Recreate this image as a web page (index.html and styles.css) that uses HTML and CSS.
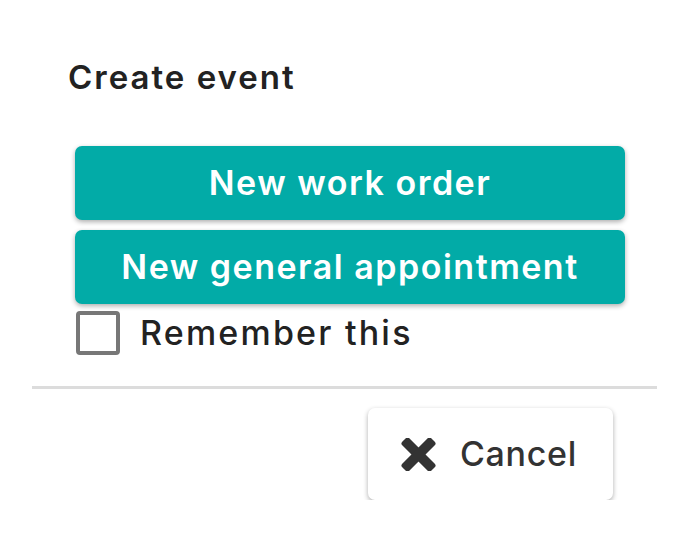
FILE: index.html
```html
<!DOCTYPE html>
<html lang="en">
<head>
<meta charset="utf-8">
<title>Create event</title>
<link rel="stylesheet" href="styles.css">
</head>
<body>
<div class="dialog">
  <h1 class="title">Create event</h1>
  <div class="actions">
    <button class="primary">New work order</button>
    <button class="primary">New general appointment</button>
    <label class="remember">
      <span class="box"></span>
      <span class="remember-text">Remember this</span>
    </label>
  </div>
  <hr class="divider">
  <div class="footer">
    <button class="cancel">
      <svg class="x-icon" viewBox="0 0 35 33" width="35" height="33" aria-hidden="true">
        <rect x="-3" y="11.5" width="41" height="10" rx="2.5" transform="rotate(45 17.5 16.5)" fill="#333"/>
        <rect x="-3" y="11.5" width="41" height="10" rx="2.5" transform="rotate(-45 17.5 16.5)" fill="#333"/>
      </svg>
      <span>Cancel</span>
    </button>
  </div>
</div>
</body>
</html>
```
FILE: styles.css
```css
html, body {
  margin: 0;
  padding: 0;
  background: #fff;
}
body {
  font-family: Inter, "Open Sans", sans-serif;
}
.dialog {
  padding: 57px 29px 0 32px;
}
.title {
  margin: 0 0 0 36px;
  font-size: 33px;
  line-height: 40px;
  font-weight: 600;
  color: #222;
  letter-spacing: 2px;
}
.actions {
  margin: 49px 0 0 43px;
  width: 550px;
  display: flex;
  flex-direction: column;
  gap: 10px;
}
.primary {
  display: block;
  width: 100%;
  height: 74px;
  border: none;
  border-radius: 7px;
  background: #02aba7;
  color: #fff;
  font-family: inherit;
  font-size: 34px;
  line-height: 40px;
  font-weight: 600;
  letter-spacing: 1.5px;
  box-shadow: 0 2px 5px rgba(0, 0, 0, 0.32);
  padding: 0;
}
.remember {
  display: flex;
  align-items: center;
  gap: 20px;
  margin-top: -3px;
  height: 44px;
  padding-left: 1px;
}
.box {
  width: 36px;
  height: 36px;
  border: 4px solid #777;
  border-radius: 4px;
  box-sizing: content-box;
  flex: none;
}
.remember-text {
  font-size: 34px;
  line-height: 40px;
  font-weight: 500;
  color: #222;
  letter-spacing: 2.2px;
}
.divider {
  margin: 31px 0 0 0;
  border: none;
  height: 3px;
  background: #dcdcdc;
}
.footer {
  display: flex;
  justify-content: flex-end;
  padding: 19px 44px 0 0;
}
.cancel {
  display: flex;
  align-items: center;
  gap: 24px;
  height: 92px;
  padding: 0 36px 0 33px;
  border: none;
  border-radius: 7px;
  background: #fff;
  box-shadow: 0 2px 5px rgba(0, 0, 0, 0.32);
  font-family: inherit;
  font-size: 34px;
  line-height: 40px;
  font-weight: 500;
  color: #333;
  letter-spacing: 0.7px;
}
.x-icon {
  display: block;
  flex: none;
}
```
